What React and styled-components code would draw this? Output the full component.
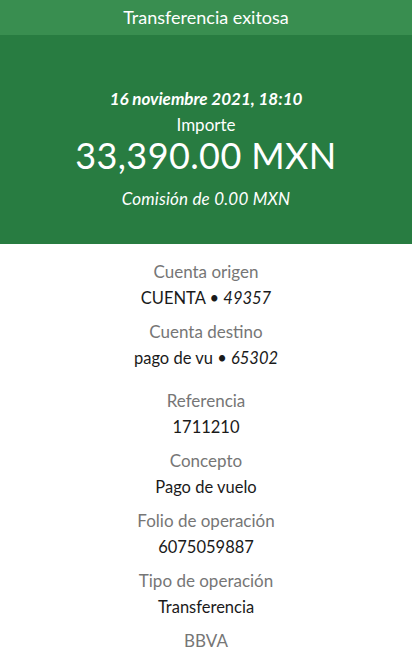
import styled, { createGlobalStyle } from "styled-components";

const GlobalStyle = createGlobalStyle`
    body {
        margin: 0;
        font-family: "Lato", "Open Sans", sans-serif;
        background: #ffffff;
    }
`;

const details = [
    { label: "Cuenta origen", value: "CUENTA", tail: "49357" },
    { label: "Cuenta destino", value: "pago de vu", tail: "65302", gap: 9 },
    { label: "Referencia", value: "1711210" },
    { label: "Concepto", value: "Pago de vuelo" },
    { label: "Folio de operación", value: "6075059887" },
    { label: "Tipo de operación", value: "Transferencia" },
    { label: "BBVA" },
];

const App = () => {
    return (
        <Page>
            <GlobalStyle />
            <TopBar>Transferencia exitosa</TopBar>
            <Summary>
                <DateLine>16 noviembre 2021, 18:10</DateLine>
                <AmountLabel>Importe</AmountLabel>
                <Amount>33,390.00 MXN</Amount>
                <Fee>Comisión de 0.00 MXN</Fee>
            </Summary>
            <Details>
                {details.map((item, index) => (
                    <Item key={index} $gap={item.gap}>
                        <Label>{item.label}</Label>
                        {item.value && (
                            <Value>
                                {item.value}
                                {item.tail && (
                                    <>
                                        {" • "}
                                        <em>{item.tail}</em>
                                    </>
                                )}
                            </Value>
                        )}
                    </Item>
                ))}
            </Details>
        </Page>
    );
};

const Page = styled.div`
    width: 412px;
    min-height: 659px;
    overflow: hidden;
`;

const TopBar = styled.div`
    height: 35px;
    background: #398e50;
    color: #ffffff;
    font-size: 18px;
    line-height: 35px;
    text-align: center;
`;

const Summary = styled.div`
    height: 209px;
    box-sizing: border-box;
    background: #287c41;
    color: #ffffff;
    display: flex;
    flex-direction: column;
    align-items: center;
    padding-top: 54px;
`;

const DateLine = styled.div`
    font-size: 17px;
    font-weight: 700;
    font-style: italic;
    line-height: 20px;
`;

const AmountLabel = styled.div`
    font-size: 17px;
    line-height: 20px;
    margin-top: 6px;
`;

const Amount = styled.div`
    font-size: 36px;
    line-height: 40px;
    font-weight: 400;
    letter-spacing: 0.4px;
`;

const Fee = styled.div`
    font-size: 17px;
    font-style: italic;
    line-height: 20px;
    margin-top: 14px;
    letter-spacing: 0.2px;
`;

const Details = styled.div`
    display: flex;
    flex-direction: column;
    align-items: center;
    padding-top: 18px;
`;

const Item = styled.div`
    display: flex;
    flex-direction: column;
    align-items: center;
    gap: 6px;
    margin-bottom: ${(p) => 14 + (p.$gap || 0)}px;
`;

const Label = styled.div`
    font-size: 17px;
    line-height: 20px;
    color: #767676;
`;

const Value = styled.div`
    font-size: 16.5px;
    line-height: 20px;
    color: #1a1a1a;
    em {
        font-style: italic;
    }
`;

export default App;
